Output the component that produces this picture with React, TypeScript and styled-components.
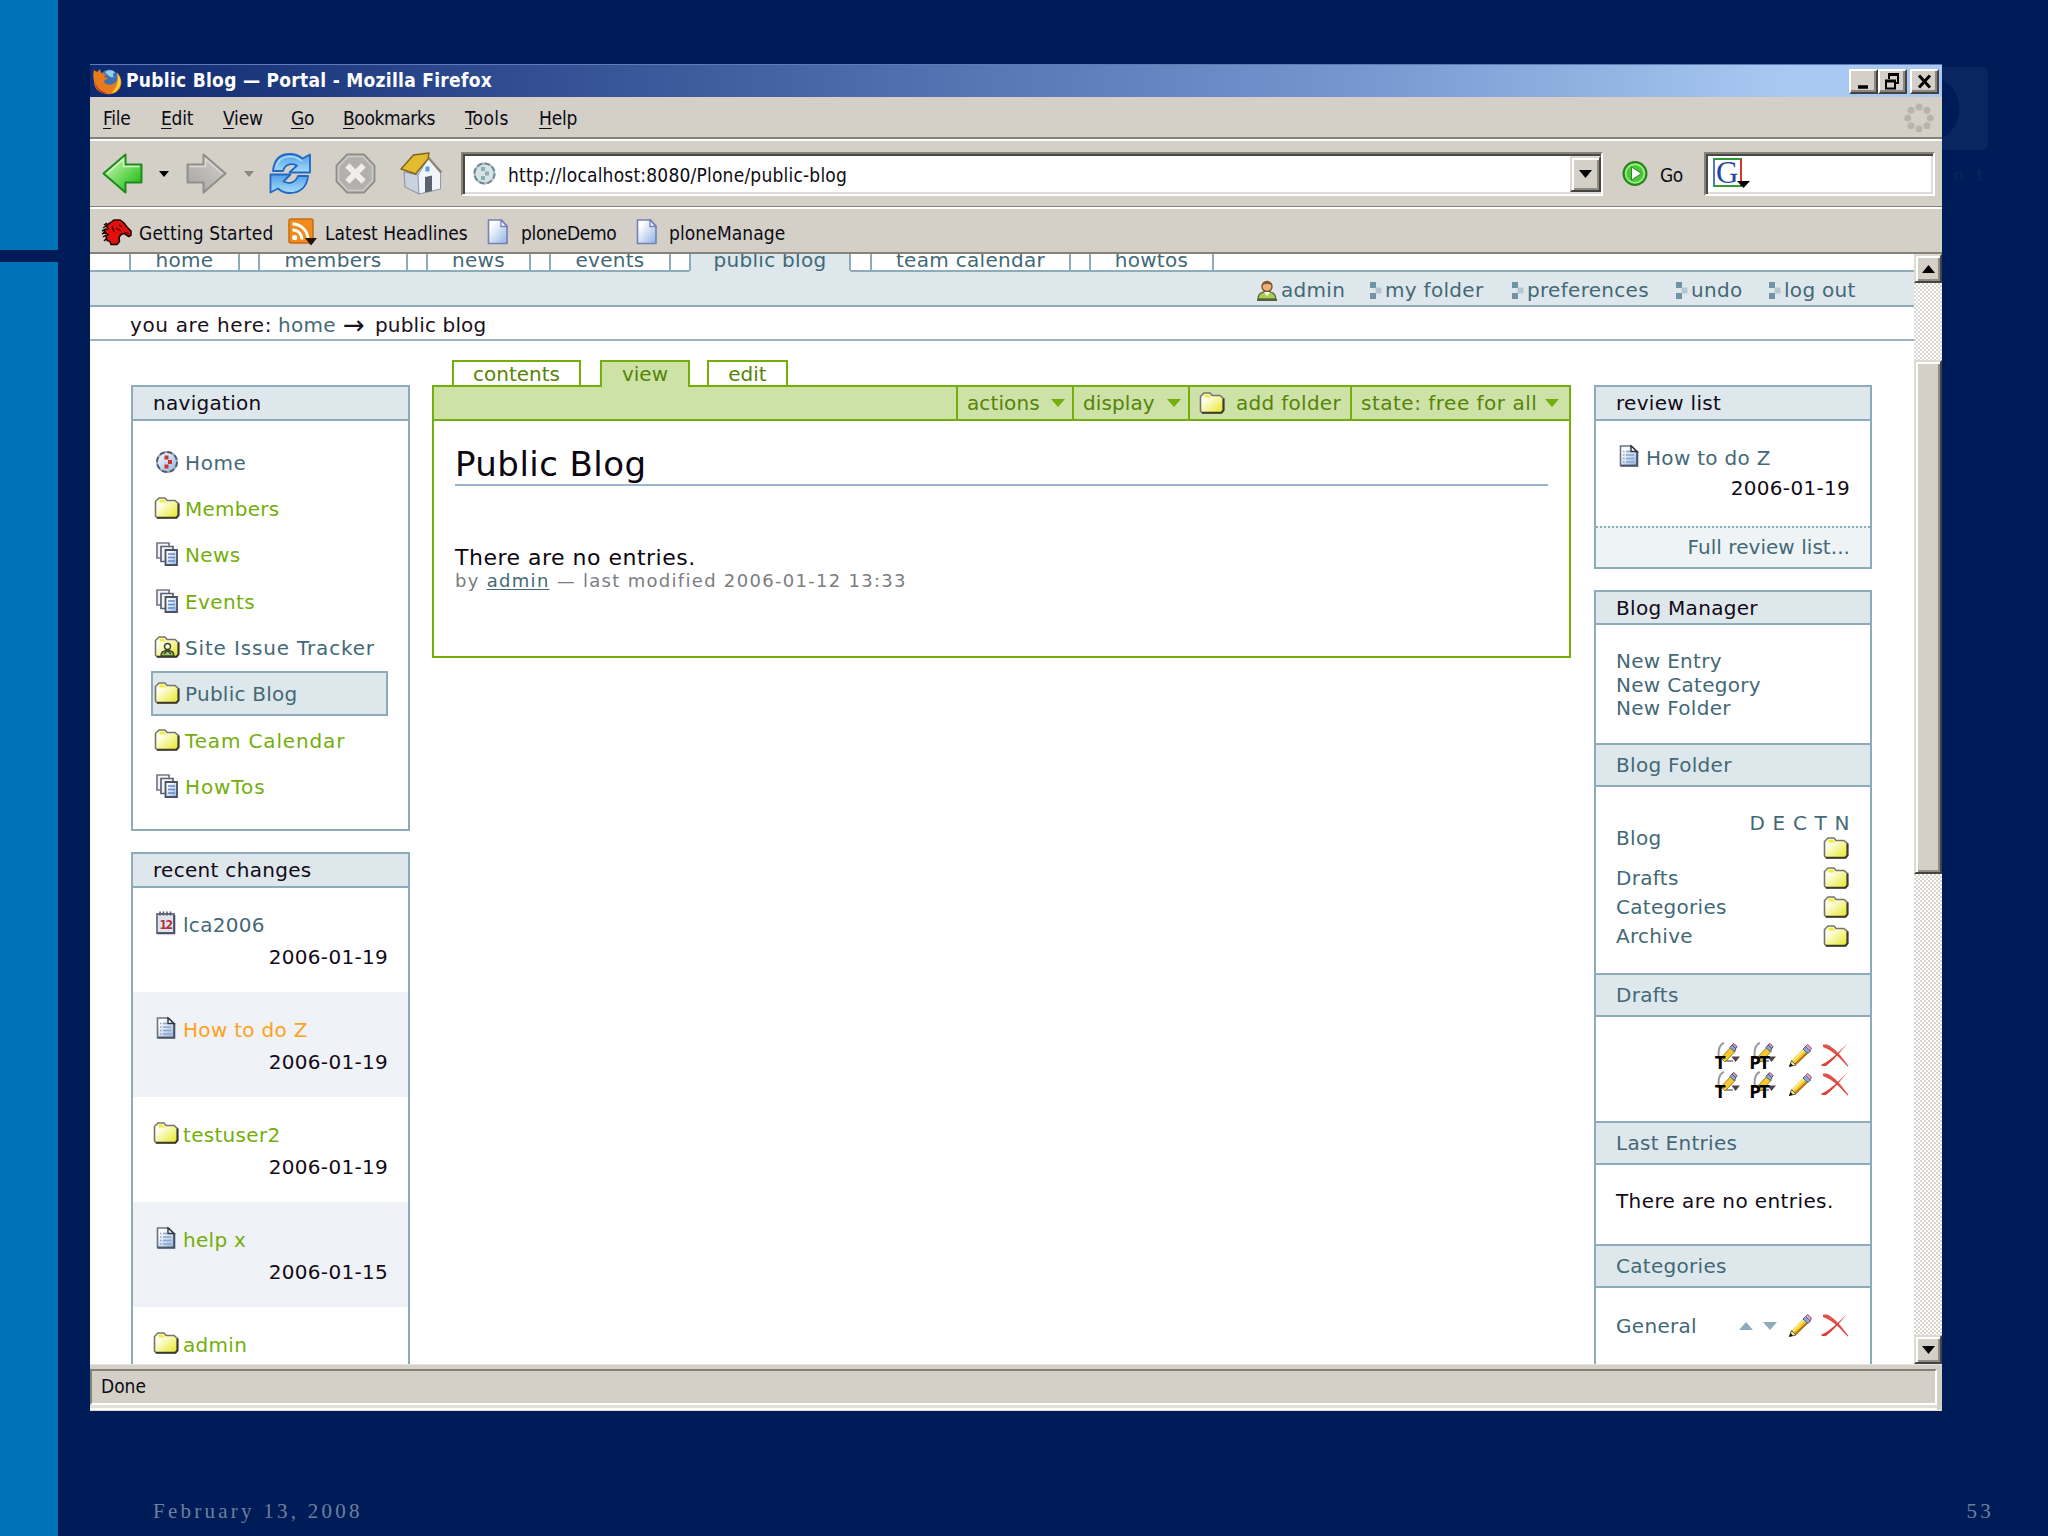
import React from "react";
import styled, { createGlobalStyle, css } from "styled-components";

const verdana = `"DejaVu Sans", Verdana, sans-serif`;
const tahoma = `"DejaVu Sans Condensed", "DejaVu Sans", Tahoma, sans-serif`;

const c = {
  navy: "#001c58",
  rail: "#0072b8",
  chrome: "#d4d0c8",
  line: "#8cacbb",
  panel: "#dee7ec",
  link: "#436976",
  green: "#74ae0b",
  greenText: "#578308",
  greenBg: "#cde2a7",
  orange: "#ffa020",
};

const Global = createGlobalStyle`
  *, *::before, *::after { box-sizing: border-box; }
  html, body { margin: 0; padding: 0; background: ${c.navy}; }
  svg { display: block; flex: none; overflow: visible; }
`;

/* ---------- slide ---------- */

const Slide = styled.div`
  display: flex;
  width: 2048px;
  height: 1536px;
  background: ${c.navy};
  overflow: hidden;
  font-family: ${verdana};
`;

const Rail = styled.div`
  display: grid;
  grid-template-rows: 250px 1fr;
  gap: 12px;
  width: 58px;
  flex: none;
`;

const RailBlock = styled.div`
  background: ${c.rail};
`;

const Stage = styled.div`
  position: relative;
  display: flex;
  flex-direction: column;
  flex: 1;
  padding: 64px 0 0 32px;
`;

const Watermark = styled.div`
  position: absolute;
  top: 67px;
  right: 60px;
  width: 120px;
  height: 83px;
  border-radius: 6px;
  background: radial-gradient(circle at 58px 42px, ${c.navy} 33px, #0a2661 34px);
`;

const WatermarkText = styled.div`
  position: absolute;
  top: 166px;
  right: 65px;
  font-size: 16px;
  letter-spacing: 13px;
  margin-right: -13px;
  color: #0a2560;
`;

const Footer = styled.div`
  display: flex;
  justify-content: space-between;
  margin-top: 87px;
  padding: 0 54px 0 63px;
  font: 21px/26px "Liberation Serif", "Times New Roman", serif;
  letter-spacing: 3.25px;
  color: #6b809c;
`;

/* ---------- browser chrome ---------- */

const Window = styled.div`
  position: relative;
  display: flex;
  flex-direction: column;
  width: 1852px;
  height: 1347px;
  background: ${c.chrome};
  font-family: ${tahoma};
  font-size: 19px;
  color: #0c0c14;
`;

const TitleBar = styled.div`
  display: flex;
  align-items: center;
  height: 33px;
  flex: none;
  padding: 0 3px;
  border-top: 1px solid #5d7cb5;
  background: linear-gradient(90deg, #0f2a70, #3e5d9f 33%, #7596cf 68%, #a8caf2 92%);
`;

const TitleText = styled.div`
  flex: 1;
  margin-left: 3px;
  padding-bottom: 2px;
  font-weight: bold;
  letter-spacing: 0.28px;
  color: #fff;
`;

const WinButton = styled.div<{ $gap?: number }>`
  display: grid;
  place-items: center;
  width: 29px;
  height: 25px;
  margin-left: ${(p) => p.$gap ?? 0}px;
  background: ${c.chrome};
  border: 2px solid;
  border-color: #fff #45433f #45433f #fff;
  box-shadow: inset -2px -2px #8a8782;
`;

const MenuBar = styled.div`
  display: grid;
  grid-template-columns: 58px 62px 68px 52px 122px 74px 1fr auto;
  align-items: center;
  height: 42px;
  flex: none;
  padding: 2px 8px 0 13px;
  border-bottom: 2px solid #85827c;
`;

const MenuItem = styled.div<{ $ls?: number }>`
  letter-spacing: ${(p) => p.$ls ?? -0.2}px;
  &::first-letter {
    text-decoration: underline;
    text-underline-offset: 3px;
  }
`;

const ToolBar = styled.div`
  display: flex;
  align-items: center;
  height: 68px;
  flex: none;
  padding: 0 7px 0 12px;
  border-top: 2px solid #fff;
  border-bottom: 1px solid #85827c;
`;

const Slot = styled.div<{ $w: number }>`
  display: flex;
  align-items: center;
  width: ${(p) => p.$w}px;
  flex: none;
`;

const Field = styled.div<{ $w: number }>`
  display: flex;
  align-items: center;
  width: ${(p) => p.$w}px;
  height: 44px;
  background: #fff;
  border: 2px solid;
  border-color: #85827c #fff #fff #85827c;
  box-shadow: inset 2px 2px #4a4845, inset -2px -2px #e0ddd6;
`;

const Url = styled.div`
  flex: 1;
  margin-left: 12px;
  padding-top: 2px;
  letter-spacing: 0.2px;
`;

const Raised = styled.div<{ $h: number; $w: number }>`
  display: grid;
  place-items: center;
  flex: none;
  width: ${(p) => p.$w}px;
  height: ${(p) => p.$h}px;
  background: ${c.chrome};
  border: 2px solid;
  border-color: #dedad2 #45433f #45433f #dedad2;
  box-shadow: inset 2px 2px #fff, inset -2px -2px #8f8c86;
`;

const GoText = styled.div`
  margin: 3px 21px 0 12px;
  letter-spacing: -0.5px;
`;

const SearchBadge = styled.div`
  position: relative;
  width: 29px;
  height: 29px;
  margin-left: 7px;
  margin-top: -2px;
  border: 2px solid;
  border-color: #2f9b35 #d8362c #2f9b35 #4f79c8;
  font: 31px/26px "Liberation Serif", serif;
  color: #2345a8;
  text-align: center;
`;

const BadgeCaret = styled.div`
  position: absolute;
  right: -10px;
  bottom: -3px;
`;

const Bookmarks = styled.div`
  display: grid;
  grid-template-columns: 37px 149px 37px 162px 34px 115px 33px 1fr;
  align-items: center;
  height: 47px;
  flex: none;
  padding: 2px 0 0 12px;
  border-top: 2px solid #fff;
  border-bottom: 2px solid #85827c;
`;

const BookmarkText = styled.div<{ $ls?: number }>`
  letter-spacing: ${(p) => p.$ls ?? 0}px;
  padding-top: 3px;
`;

const Viewport = styled.div`
  display: flex;
  height: 1110px;
  flex: none;
`;

const StatusBar = styled.div`
  height: 47px;
  padding: 4px 5px 3px 0;
  border-top: 1px solid #e8e5de;
  border-bottom: 2px solid #dedbd3;
`;

const StatusCell = styled.div`
  display: flex;
  align-items: center;
  height: 36px;
  padding: 0 0 3px 9px;
  border: 2px solid;
  border-color: #85827c #fff #fff #85827c;
  box-shadow: 0 3px #e2dfd8, 0 5px #fff;
`;

const ScrollBar = styled.div`
  display: flex;
  flex-direction: column;
  width: 28px;
`;

const Track = styled.div<{ $h?: number }>`
  ${(p) => (p.$h ? css`height: ${p.$h}px;` : css`flex: 1;`)}
  background: repeating-conic-gradient(#fff 0 25%, #d9d6cf 0 50%) 0 0 / 4px 4px;
`;

/* ---------- page ---------- */

const Page = styled.div`
  display: flex;
  flex-direction: column;
  width: 1824px;
  background: #fff;
  overflow: hidden;
  font-family: ${verdana};
  font-size: 20px;
  letter-spacing: 0.3px;
`;

const SectionTabs = styled.div`
  display: flex;
  height: 18px;
  flex: none;
  overflow: hidden;
`;

const SectionGap = styled.div<{ $w?: number }>`
  ${(p) => (p.$w ? css`width: ${p.$w}px;` : css`flex: 1;`)}
  border-bottom: 2px solid ${c.line};
`;

const SectionTab = styled.div<{ $w: number; $active?: boolean }>`
  width: ${(p) => p.$w}px;
  height: 18px;
  border: 2px solid ${c.line};
  border-top: 0;
  background: ${(p) => (p.$active ? c.panel : "#fff")};
  ${(p) => p.$active && css`border-bottom-color: ${c.panel};`}
  color: ${c.link};
  text-align: center;
`;

const SectionLabel = styled.div`
  height: 24px;
  margin-top: -6px;
  line-height: 24px;
`;

const PersonalBar = styled.div`
  display: grid;
  grid-template-columns: 113px 142px 164px 93px 145px;
  align-items: center;
  height: 35px;
  flex: none;
  padding: 3px 0 0 1167px;
  background: ${c.panel};
  border-bottom: 2px solid ${c.line};
  color: ${c.link};
`;

const PersonalItem = styled.div`
  display: flex;
  align-items: center;
`;

const Crumbs = styled.div`
  display: flex;
  align-items: center;
  height: 34px;
  flex: none;
  padding: 4px 0 0 40px;
  border-bottom: 2px solid #9ab5c1;
  color: #1b1020;
`;

const CrumbLabel = styled.span`
  letter-spacing: 0.65px;
  margin-right: 6px;
`;

const CrumbLink = styled.span`
  color: ${c.link};
  margin-right: 7px;
`;

const CrumbArrow = styled.span`
  width: 22px;
  margin-right: 10px;
  font-size: 26px;
  line-height: 24px;
  letter-spacing: 0;
`;

const CrumbHere = styled.span`
  letter-spacing: 0.15px;
`;

const Columns = styled.div`
  display: grid;
  grid-template-columns: 279px 1140px 278px;
  column-gap: 22px;
  align-items: start;
  padding-left: 41px;
`;

const Side = styled.div`
  display: flex;
  flex-direction: column;
  gap: 21px;
  padding-top: 44px;
`;

const Portlet = styled.div<{ $h?: number }>`
  ${(p) => p.$h && css`height: ${p.$h}px;`}
  border: 2px solid ${c.line};
`;

const PortletHead = styled.div<{ $h?: number }>`
  display: flex;
  align-items: center;
  height: ${(p) => p.$h ?? 34}px;
  padding: 0 20px;
  background: ${c.panel};
  border-bottom: 2px solid ${c.line};
  color: #120a16;
`;

const NavList = styled.div`
  display: flex;
  flex-direction: column;
  gap: 1.4px;
  padding: 18px 20px 0 18px;
`;

const NavItem = styled.div<{ $c: string; $active?: boolean }>`
  display: flex;
  align-items: center;
  height: 45px;
  padding-left: 1px;
  border: 2px solid ${(p) => (p.$active ? c.line : "transparent")};
  background: ${(p) => (p.$active ? c.panel : "transparent")};
  color: ${(p) => p.$c};
`;

const NavLabel = styled.span<{ $ls: number }>`
  margin: 2px 0 0 6px;
  letter-spacing: ${(p) => p.$ls}px;
`;

const IconCell = styled.span<{ $lift?: number }>`
  display: flex;
  justify-content: center;
  width: 25px;
  flex: none;
  margin-bottom: ${(p) => p.$lift ?? 0}px;
`;

const Change = styled.div<{ $first?: boolean; $odd?: boolean }>`
  height: ${(p) => (p.$first ? 104 : 105)}px;
  padding: ${(p) => (p.$first ? 21 : 22)}px 20px 0;
  background: ${(p) => (p.$odd ? "#eff2f6" : "#fff")};
`;

const ChangeTitle = styled.div<{ $c: string; $h?: number }>`
  display: flex;
  align-items: center;
  gap: 5px;
  height: ${(p) => p.$h ?? 32}px;
  color: ${(p) => p.$c};
`;

const ChangeDate = styled.div<{ $h?: number }>`
  height: ${(p) => p.$h ?? 32}px;
  line-height: ${(p) => p.$h ?? 32}px;
  text-align: right;
  color: #120a16;
`;

const ReviewBody = styled.div`
  height: 105px;
  padding: 21px 20px 0;
`;

const ReviewFooter = styled.div`
  height: 41px;
  padding-right: 20px;
  border-top: 2px dotted ${c.line};
  background: #eef3f5;
  line-height: 39px;
  text-align: right;
  color: ${c.link};
  letter-spacing: 0.05px;
`;

const SubHead = styled.div`
  display: flex;
  align-items: center;
  height: 44px;
  padding: 0 20px;
  background: ${c.panel};
  border: 2px solid ${c.line};
  border-width: 2px 0;
  color: ${c.link};
`;

const SideBody = styled.div<{ $h: number; $top: number }>`
  height: ${(p) => p.$h}px;
  padding: ${(p) => p.$top}px 20px 0;
  color: ${c.link};
`;

const LinkLine = styled.div`
  height: 23.7px;
  line-height: 23.7px;
`;

const FolderRow = styled.div<{ $h: number }>`
  display: flex;
  align-items: center;
  justify-content: space-between;
  height: ${(p) => p.$h}px;
  padding-right: 1px;
`;

const FolderTools = styled.div`
  display: grid;
  grid-template-rows: 20px 30px;
  align-items: center;
  justify-items: end;
`;

const Letters = styled.div`
  margin-right: -1px;
  letter-spacing: 0.65px;
`;

const Actions = styled.div<{ $cols: string }>`
  display: grid;
  grid-template-columns: ${(p) => p.$cols};
  align-items: center;
  justify-content: end;
  height: 29px;
`;

const Message = styled.div`
  line-height: 30px;
  letter-spacing: 0.4px;
  color: #120a16;
`;

const Main = styled.div`
  padding: 19px 1px 0 0;
`;

const ViewTabs = styled.div`
  display: flex;
  height: 25px;
  padding-left: 20px;
`;

const ViewTab = styled.div<{ $w: number; $gap: number; $active?: boolean }>`
  position: relative;
  width: ${(p) => p.$w}px;
  height: ${(p) => (p.$active ? 27 : 25)}px;
  margin-right: ${(p) => p.$gap}px;
  border: 2px solid ${c.green};
  border-bottom: 0;
  background: ${(p) => (p.$active ? c.greenBg : "#fff")};
  line-height: 24px;
  text-align: center;
  letter-spacing: 0;
  color: ${c.greenText};
`;

const ContentBox = styled.div`
  height: 273px;
  border: 2px solid ${c.green};
`;

const ContentBar = styled.div`
  display: flex;
  justify-content: flex-end;
  height: 34px;
  background: ${c.greenBg};
  border-bottom: 2px solid ${c.green};
  color: ${c.greenText};
`;

const ContentAction = styled.div<{ $w: number; $right?: number; $ls?: number }>`
  display: flex;
  align-items: center;
  justify-content: space-between;
  width: ${(p) => p.$w}px;
  padding: 0 ${(p) => p.$right ?? 7}px 0 9px;
  border-left: 2px solid ${c.green};
  letter-spacing: ${(p) => p.$ls ?? 0.3}px;
`;

const Article = styled.div`
  padding: 24px 21px 0;
  color: #0c0610;
`;

const Heading = styled.div`
  height: 41px;
  border-bottom: 2px solid #9bb6cc;
  font-size: 34px;
  line-height: 39px;
  letter-spacing: 0.45px;
`;

const Lead = styled.div`
  margin-top: 59px;
  font-size: 22px;
  line-height: 26px;
  letter-spacing: 0.5px;
`;

const Byline = styled.div`
  font-size: 18px;
  line-height: 20px;
  letter-spacing: 1.3px;
  color: #7b7d82;
`;

const Author = styled.span`
  color: ${c.link};
  text-decoration: underline;
  text-underline-offset: 2px;
`;

/* ---------- icons ---------- */

const Caret = ({ w = 14, h = 8, fill = "#000", up = false }) => (
  <svg width={w} height={h} viewBox="0 0 14 8" preserveAspectRatio="none">
    <path d={up ? "M0 8h14L7 0z" : "M0 0h14L7 8z"} fill={fill} />
  </svg>
);

const HiddenSvg = styled.svg`
  position: absolute;
  width: 0;
  height: 0;
`;

const Defs = () => (
  <HiddenSvg>
    <defs>
      <linearGradient id="folder" x1="0" y1="0" x2="1" y2="1">
        <stop offset="0.25" stopColor="#fffff0" />
        <stop offset="1" stopColor="#e6e61c" />
      </linearGradient>
      <linearGradient id="paper" x1="0" y1="0" x2="1" y2="1">
        <stop offset="0.2" stopColor="#fff" />
        <stop offset="1" stopColor="#8fb2e4" />
      </linearGradient>
      <linearGradient id="back" x1="0" y1="0" x2="1" y2="1">
        <stop offset="0.2" stopColor="#b6f2a0" />
        <stop offset="0.8" stopColor="#35c428" />
      </linearGradient>
      <linearGradient id="grey" x1="0" y1="0" x2="1" y2="1">
        <stop offset="0" stopColor="#d2d0cc" />
        <stop offset="1" stopColor="#a6a4a1" />
      </linearGradient>
      <linearGradient id="blue" x1="0" y1="0" x2="0" y2="1">
        <stop offset="0" stopColor="#4f9fe8" />
        <stop offset="1" stopColor="#a8dcfb" />
      </linearGradient>
      <linearGradient id="ball" x1="0" y1="0" x2="1" y2="1">
        <stop offset="0" stopColor="#fff" />
        <stop offset="1" stopColor="#8db4e2" />
      </linearGradient>
    </defs>
  </HiddenSvg>
);

const FolderIcon = ({ person = false }) => (
  <svg width="26" height="22" viewBox="0 0 26 22">
    <path
      d="M1.5 19V4.5L3.5 2.5 5 1h6l2 2.5h8l3.5 3V18L22 20.7H3z"
      fill="url(#folder)"
      stroke="#77756a"
      strokeWidth="1.6"
    />
    <path d="M3 20.8h19.5l2-2.5V6.5" fill="none" stroke="#3c3a2c" strokeWidth="2" />
    <path d="M5 2.5h5l2 3h-6z" fill="#f0ee3a" />
    {person && (
      <g stroke="#38422c" strokeWidth="1.4">
        <circle cx="13.5" cy="10.5" r="3" fill="#fdfbe0" />
        <path d="M7 20c0-4 3-5.5 6.5-5.5S20 16 20 20z" fill="#a9c95e" />
        <path d="M10 18l3.5-3.5L17 18" fill="none" />
      </g>
    )}
  </svg>
);

const DocIcon = () => (
  <svg width="20" height="22" viewBox="0 0 20 22">
    <path d="M1.5 1h11L18 6.5V20.5H1.5z" fill="url(#paper)" stroke="#6c7480" strokeWidth="1.6" />
    <path d="M1.5 20.7H18.3V6" fill="none" stroke="#4a5464" strokeWidth="2" />
    <path d="M12 1v5.5h6z" fill="#fff" stroke="#2c3340" strokeWidth="1.4" />
    <path
      d="M4 6.5h1.5M7 6.5h4M4 10h1.500M7 10h8M4 13.5h1.5M7 13.5h8M4 17h1.5M7 17h8"
      stroke="#8fa5c8"
      strokeWidth="1.4"
    />
  </svg>
);

const PagesIcon = () => (
  <svg width="22" height="24" viewBox="0 0 22 24">
    <path d="M1 1h12v15H1z" fill="#f3f4f8" stroke="#747986" strokeWidth="1.7" />
    <path d="M5 4.500h12v15H5z" fill="#f3f4f8" stroke="#5d6270" strokeWidth="1.7" />
    <path d="M9.5 8H21v15H9.5z" fill="url(#paper)" stroke="#4b5160" strokeWidth="1.8" />
    <path d="M12 12h7M12 15.5h7M12 19h7" stroke="#5d8ad0" strokeWidth="1.6" />
  </svg>
);

const PloneIcon = () => (
  <svg width="22" height="22" viewBox="0 0 22 22">
    <circle cx="11" cy="11" r="10" fill="url(#ball)" stroke="#98a3b4" strokeWidth="1.8" />
    <circle cx="11" cy="11" r="10" fill="none" stroke="#4d586c" strokeWidth="1.8" strokeDasharray="5 2.85" />
    <path d="M8.5 4.500h4v4h-4zM12 9h4v4h-4zM8.5 13.500h4v4h-4z" fill="#d0342c" />
  </svg>
);

const CalendarIcon = () => (
  <svg width="19" height="23" viewBox="0 0 19 23">
    <path d="M1 3h17v19H1z" fill="#dfe3ef" stroke="#6c7080" strokeWidth="1.8" />
    <path d="M1 22.300h17.300V4" fill="none" stroke="#4c5264" strokeWidth="2" />
    <path d="M4 .5v4M7.5 .5v4M11 .5v4M14.5 .5v4" stroke="#555a68" strokeWidth="1.5" />
    <CalendarDay x="3.5" y="17.5">12</CalendarDay>
  </svg>
);

const CalendarDay = styled.text`
  font: bold 12px "DejaVu Sans Condensed", sans-serif;
  letter-spacing: -1.5px;
  fill: #b0303c;
`;

const UserIcon = () => (
  <svg width="20" height="21" viewBox="0 0 20 21">
    <path d="M1 19c0-5 4-7.5 9-7.5s9 2.5 9 7.5z" fill="#a9cf52" stroke="#5d6a35" strokeWidth="1.3" />
    <path d="M7 12l3 4 3-4z" fill="#fff" />
    <circle cx="10" cy="6.5" r="5" fill="#eab27a" stroke="#80502c" strokeWidth="1.4" />
    <path d="M5 5c1-4 9-4 10 0-3-1.5-7-1.5-10 0z" fill="#8a562c" />
    <path d="M0 20h20" stroke="#56603c" strokeWidth="2" />
  </svg>
);

const Marker = () => (
  <svg width="15" height="17" viewBox="0 0 15 17">
    <path d="M0 0h6v6H0zM0 11h6v6H0z" fill="#6f95a4" />
    <path d="M5.5 5.5h6v6h-6z" fill="#b4c7d0" />
  </svg>
);

const PencilIcon = () => (
  <svg width="24" height="24" viewBox="0 0 24 24">
    <path d="M3.5 16.5L16 4l5 4.500L8 21z" fill="#f7c92c" />
    <path d="M7 20.5L20 8" stroke="#b5761a" strokeWidth="2" />
    <path d="M5 17L16.5 5.5" stroke="#fdf09a" strokeWidth="1.5" />
    <path d="M3.5 16.5L1.5 22.5 8 21z" fill="#f6e3b8" stroke="#6b5a30" strokeWidth="1" />
    <path d="M1 23l1.5-4 2.5 2.5z" fill="#111" />
    <path d="M15 5l2.5-2.5 5 4.5L20 9.5z" fill="#7db0e0" stroke="#44688c" strokeWidth="1" />
    <path d="M17.5 2.5l2-2 4 3.5-1.5 3z" fill="#e59bc0" stroke="#8c567c" strokeWidth="1" />
  </svg>
);

const CrossIcon = () => (
  <svg width="28" height="23" viewBox="0 0 28 23">
    <path d="M2 .5h4c7 3 14 11 21.500 21.500L26.500 22.500C20 15 11 6 2 3z" fill="#e05048" />
    <path d="M26 0C21 6 12 17 5 22H0.500v-1.500C9 17 18 8 26 0z" fill="#d8443c" />
  </svg>
);

const IconCaption = styled.text`
  font: bold 17px "DejaVu Sans Condensed", sans-serif;
  letter-spacing: -1.5px;
  fill: #000;
`;

const RenameIcon = ({ label }: { label: string }) => (
  <svg width="26" height="27" viewBox="0 0 26 27">
    <path d="M10 1C4 3 4 12 5 17" fill="none" stroke="#9a9a9a" strokeWidth="2" />
    <path d="M7 16L17 5l4.500 4L11 20z" fill="#f7c92c" stroke="#a87d20" strokeWidth="1" />
    <path d="M16 5.5l2-2.5 4 4-2 2.5z" fill="#7db0e0" stroke="#3f5878" strokeWidth="1" />
    <path d="M18 3l2-1.5 3 3-1 2z" fill="#e59bc0" stroke="#704860" strokeWidth="1" />
    <path d="M12 19h7" stroke="#777" strokeWidth="1.5" />
    <path d="M17.500 14.500h8.500l-4.500 5.500z" fill="#52424c" />
    <IconCaption x={label === "T" ? 1 : -0.5} y="26.5">{label}</IconCaption>
  </svg>
);

const FirefoxIcon = () => (
  <svg width="30" height="27" viewBox="0 0 30 27">
    <circle cx="16" cy="11.5" r="10" fill="#3c6fb4" />
    <path d="M12 4c4-3 9-2 10 1-2 0-3 2-1 4-3 1-6-1-9-5z" fill="#8fd0ea" />
    <path
      d="M1 2l3 2 3-3 1 4 5 1-2 3 4 1c-2 2-4 2-4 4 2 3 7 4 11 1 3-2 3-7 2-11 4 5 6 10 3 16-3 5-8 7-13 6C6 25 1 21 1 13 0 9 0 5 1 2z"
      fill="#e87a1c"
    />
    <path d="M24 5c4 5 5 10 2 15-2 3-5 5-8 5 6-4 8-12 6-20z" fill="#f9cf3a" />
    <path d="M2 13c1 7 6 11 12 12-6 1-12-4-12-12z" fill="#b3260f" />
  </svg>
);

const ArrowIcon = ({ forward = false }) => (
  <svg width="41" height="41" viewBox="0 0 41 41">
    <g transform={forward ? "translate(41 0) scale(-1 1)" : undefined}>
      <path
        d="M1.5 20.5L23.5 1.5V11.5H39.5V29.5H23.5V39.5z"
        fill={forward ? "url(#grey)" : "url(#back)"}
        stroke={forward ? "#918f8c" : "#1f8a1c"}
        strokeWidth="2"
        strokeLinejoin="round"
      />
      <path
        d="M5 20.5L21.5 6V13.5H37.5"
        fill="none"
        stroke={forward ? "#dcdad6" : "#d4f9c6"}
        strokeWidth="1.5"
      />
    </g>
  </svg>
);

const ReloadIcon = () => (
  <svg width="41" height="41" viewBox="0 0 41 41">
    <g fill="url(#blue)" stroke="#1f68c4" strokeWidth="1.8" strokeLinejoin="round">
      <path d="M3 18C4 7 10 1 20 1c6 0 9 1.500 12.500 4.500L40 1.500V19.500H19.500L27 12.500c-6-3-12-1-14 5.500z" />
      <path d="M38 23c-1 11-8 17-18 17-5 0-9-1.500-12-4.500L.5 39.500V21.500H20.500L13.500 28.500c6 3 12 1 14.500-5.500z" />
    </g>
    <path d="M6 14C8 7 13 3.500 20 3.500c5 0 8 1.500 12 4.500" fill="none" stroke="#b5defa" strokeWidth="1.4" />
  </svg>
);

const StopIcon = () => (
  <svg width="41" height="41" viewBox="0 0 41 41">
    <path
      d="M12 1.500h17l10.500 11v16L29 39.500H12L1.500 28.500v-16z"
      fill="#b3b1ae"
      stroke="#8f8d8a"
      strokeWidth="1.8"
    />
    <path d="M13 3.500h15l9.500 10v14L28 37.500H13L3.500 27.500v-14z" fill="none" stroke="#cfcdc9" strokeWidth="1.5" />
    <path d="M14.500 14.500l12 12M26.500 14.500l-12 12" stroke="#efeeec" strokeWidth="6" strokeLinecap="square" />
  </svg>
);

const HomeIcon = () => (
  <svg width="44" height="43" viewBox="0 0 44 43">
    <path d="M4 20l15 3v19L5 35z" fill="#c9d2df" stroke="#8790a0" />
    <path d="M18 23L29 5l11.500 14v18l-21.500 5z" fill="#f1f4fa" stroke="#9099a8" />
    <path d="M27 3l15.500 17-2.500 1L28 7z" fill="#8d8674" />
    <path
      d="M13.500 3L29 1l-1 6-12.500 15L1 17z"
      fill="#e3bb31"
      stroke="#7c6420"
      strokeWidth="1.4"
      strokeLinejoin="round"
    />
    <path d="M25 25l7-1.500V39l-7 1.500z" fill="#59606e" />
    <path d="M25.500 14.500h4v5h-4z" fill="#5b9be4" />
  </svg>
);

const SiteIcon = () => (
  <svg width="23" height="23" viewBox="0 0 23 23">
    <circle cx="11.5" cy="11.5" r="10" fill="#d6e4e8" stroke="#a9bcc4" strokeWidth="2" />
    <circle cx="11.5" cy="11.5" r="10" fill="none" stroke="#6e8794" strokeWidth="2" strokeDasharray="5 2.85" />
    <path d="M8 5h4v4H8zM12 9.5h4v4h-4zM8 14h4v4H8z" fill="#8eacb4" />
  </svg>
);

const GoIcon = () => (
  <svg width="26" height="27" viewBox="0 0 26 27">
    <circle cx="13" cy="13.5" r="11.5" fill="#4cc63c" stroke="#27831f" strokeWidth="2" />
    <circle cx="13" cy="13.5" r="9.3" fill="none" stroke="#a8ec90" strokeWidth="1.5" />
    <path d="M9.5 7v13l10-6.5z" fill="#fff" stroke="#2c8a22" />
  </svg>
);

const DinoIcon = () => (
  <svg width="30" height="26" viewBox="0 0 30 26">
    <path
      d="M8 4l4-3h6l4 3 3 4 4 4v4l-2 1.500-5-3-3 1-2 3 .5 4-2.500 3h-6l-1-3-3-1-1-4 2-2-4-2 1-3 3-1-2-3z"
      fill="#e0100c"
      stroke="#1c0402"
      strokeWidth="1.5"
    />
    <path
      d="M5 4L2 6M4 7L1 9M4 10L0 12M4 13L0 15M4 16L1 18M5 19L2 22"
      stroke="#1c0402"
      strokeWidth="1.5"
    />
    <path d="M17 6l3 1.500M14 9l5 3M22 13l5 2M10 7l2 6" stroke="#5a0402" strokeWidth="1.3" />
  </svg>
);

const FeedIcon = () => (
  <svg width="30" height="28" viewBox="0 0 30 28">
    <rect x="1" y="1" width="24" height="24" rx="2" fill="#f08c1e" stroke="#c86a10" strokeWidth="1.5" />
    <g fill="none" stroke="#fff" strokeWidth="2.8">
      <path d="M4.5 6C13 6 20 13 20 21.5" />
      <path d="M4.5 12c5.5 0 9.500 4 9.500 9.500" />
    </g>
    <circle cx="6.7" cy="19.5" r="2.6" fill="#fff" />
    <path d="M17 20h12l-6 7.500z" fill="#221508" />
  </svg>
);

const PageIcon = () => (
  <svg width="22" height="26" viewBox="0 0 22 26">
    <path d="M1.5 1h13L20 7v17.500H1.5z" fill="url(#paper)" stroke="#7480b8" strokeWidth="1.6" />
    <path d="M14 1v6.500h6z" fill="#f6f8ff" stroke="#7480b8" strokeWidth="1.3" />
  </svg>
);

const Throbber = () => (
  <svg width="30" height="28" viewBox="0 0 30 28">
    {Array.from({ length: 8 }, (_, i) => {
      const a = (i * Math.PI) / 4;
      return <circle key={i} cx={15 + 11.3 * Math.sin(a)} cy={14 - 11 * Math.cos(a)} r="3.5" fill="#b7b4ae" />;
    })}
  </svg>
);

/* ---------- data ---------- */

const nav = [
  { label: "Home", icon: <PloneIcon />, color: c.link, ls: 0.6 },
  { label: "Members", icon: <FolderIcon />, color: c.green, ls: 0.25 },
  { label: "News", icon: <PagesIcon />, color: c.green, ls: 0.4 },
  { label: "Events", icon: <PagesIcon />, color: c.green, ls: 0.4 },
  { label: "Site Issue Tracker", icon: <FolderIcon person />, color: c.link, ls: 0.83 },
  { label: "Public Blog", icon: <FolderIcon />, color: c.link, active: true, ls: 0.25 },
  { label: "Team Calendar", icon: <FolderIcon />, color: c.green, ls: 0.85 },
  { label: "HowTos", icon: <PagesIcon />, color: c.green, ls: 0.9 },
];

const changes = [
  { label: "lca2006", icon: <CalendarIcon />, color: c.link, date: "2006-01-19" },
  { label: "How to do Z", icon: <DocIcon />, color: c.orange, date: "2006-01-19" },
  { label: "testuser2", icon: <FolderIcon />, color: c.green, date: "2006-01-19" },
  { label: "help x", icon: <DocIcon />, color: c.green, date: "2006-01-15" },
  { label: "admin", icon: <FolderIcon />, color: c.green, date: "" },
];

const sections = [
  { label: "home", w: 111, gap: 18 },
  { label: "members", w: 150, gap: 18 },
  { label: "news", w: 105, gap: 18 },
  { label: "events", w: 122, gap: 18 },
  { label: "public blog", w: 162, gap: 19, active: true },
  { label: "team calendar", w: 201, gap: 18 },
  { label: "howtos", w: 125, gap: 0 },
];

const menus = [
  { label: "File" },
  { label: "Edit" },
  { label: "View" },
  { label: "Go" },
  { label: "Bookmarks", ls: -0.4 },
  { label: "Tools", ls: 0.4 },
  { label: "Help" },
];

/* ---------- app ---------- */

const Chrome = () => (
  <>
    <TitleBar>
      <FirefoxIcon />
      <TitleText>Public Blog — Portal - Mozilla Firefox</TitleText>
      <WinButton>
        <svg width="19" height="17"><path d="M4 14h10" stroke="#000" strokeWidth="3.5" /></svg>
      </WinButton>
      <WinButton>
        <svg width="19" height="19" fill="none" stroke="#000" strokeWidth="2">
          <path d="M6 7V2h9v9h-3M6 3h9M3 8.500h9v8H3zM3 9.500h9" />
        </svg>
      </WinButton>
      <WinButton $gap={3}>
        <svg width="16" height="15"><path d="M2 1.500l11 12M13 1.500l-11 12" stroke="#000" strokeWidth="3" /></svg>
      </WinButton>
    </TitleBar>
    <MenuBar>
      {menus.map((m) => (
        <MenuItem key={m.label} $ls={m.ls}>{m.label}</MenuItem>
      ))}
      <Throbber />
    </MenuBar>
    <ToolBar>
      <Slot $w={57}><ArrowIcon /></Slot>
      <Slot $w={27}><Caret w={10} h={6} /></Slot>
      <Slot $w={58}><ArrowIcon forward /></Slot>
      <Slot $w={26}><Caret w={10} h={6} fill="#8a8884" /></Slot>
      <Slot $w={65}><ReloadIcon /></Slot>
      <Slot $w={65}><StopIcon /></Slot>
      <Slot $w={61}><HomeIcon /></Slot>
      <Field $w={1142}>
        <Slot $w={10} />
        <SiteIcon />
        <Url>http://localhost:8080/Plone/public-blog</Url>
        <Raised $w={31} $h={36}><Caret w={13} h={8} /></Raised>
      </Field>
      <Slot $w={19} />
      <GoIcon />
      <GoText>Go</GoText>
      <Field $w={231}>
        <SearchBadge>
          G
          <BadgeCaret><Caret w={13} h={7} /></BadgeCaret>
        </SearchBadge>
      </Field>
    </ToolBar>
    <Bookmarks>
      <DinoIcon />
      <BookmarkText $ls={0.15}>Getting Started</BookmarkText>
      <FeedIcon />
      <BookmarkText>Latest Headlines</BookmarkText>
      <PageIcon />
      <BookmarkText $ls={-0.3}>ploneDemo</BookmarkText>
      <PageIcon />
      <BookmarkText $ls={0.1}>ploneManage</BookmarkText>
    </Bookmarks>
  </>
);

const LeftColumn = () => (
  <Side>
    <Portlet $h={446}>
      <PortletHead>navigation</PortletHead>
      <NavList>
        {nav.map((n) => (
          <NavItem key={n.label} $c={n.color} $active={n.active}>
            <IconCell>{n.icon}</IconCell>
            <NavLabel $ls={n.ls}>{n.label}</NavLabel>
          </NavItem>
        ))}
      </NavList>
    </Portlet>
    <Portlet>
      <PortletHead>recent changes</PortletHead>
      {changes.map((x, i) => (
        <Change key={x.label} $first={i === 0} $odd={i % 2 === 1}>
          <ChangeTitle $c={x.color}>
            <IconCell $lift={5}>{x.icon}</IconCell>
            {x.label}
          </ChangeTitle>
          <ChangeDate>{x.date}</ChangeDate>
        </Change>
      ))}
    </Portlet>
  </Side>
);

const Center = () => (
  <Main>
    <ViewTabs>
      <ViewTab $w={129} $gap={19}>contents</ViewTab>
      <ViewTab $w={90} $gap={17} $active>view</ViewTab>
      <ViewTab $w={81} $gap={0}>edit</ViewTab>
    </ViewTabs>
    <ContentBox>
      <ContentBar>
        <ContentAction $w={116} $ls={0.1}>actions<Caret fill={c.green} /></ContentAction>
        <ContentAction $w={116} $ls={0.1}>display<Caret fill={c.green} /></ContentAction>
        <ContentAction $w={162} $right={9}><FolderIcon />add folder</ContentAction>
        <ContentAction $w={219} $right={10} $ls={0.5}>state: free for all<Caret fill={c.green} /></ContentAction>
      </ContentBar>
      <Article>
        <Heading>Public Blog</Heading>
        <Lead>There are no entries.</Lead>
        <Byline>
          by <Author>admin</Author> — last modified 2006-01-12 13:33
        </Byline>
      </Article>
    </ContentBox>
  </Main>
);

const RightColumn = () => (
  <Side>
    <Portlet $h={184}>
      <PortletHead>review list</PortletHead>
      <ReviewBody>
        <ChangeTitle $c={c.link} $h={31}>
          <IconCell $lift={4}><DocIcon /></IconCell>
          How to do Z
        </ChangeTitle>
        <ChangeDate $h={31}>2006-01-19</ChangeDate>
      </ReviewBody>
      <ReviewFooter>Full review list...</ReviewFooter>
    </Portlet>
    <Portlet>
      <PortletHead $h={33}>Blog Manager</PortletHead>
      <SideBody $h={118} $top={25}>
        <LinkLine>New Entry</LinkLine>
        <LinkLine>New Category</LinkLine>
        <LinkLine>New Folder</LinkLine>
      </SideBody>
      <SubHead>Blog Folder</SubHead>
      <SideBody $h={186} $top={26}>
        <FolderRow $h={50}>
          Blog
          <FolderTools>
            <Letters>D E C T N</Letters>
            <FolderIcon />
          </FolderTools>
        </FolderRow>
        {["Drafts", "Categories", "Archive"].map((f) => (
          <FolderRow key={f} $h={29}>{f}<FolderIcon /></FolderRow>
        ))}
      </SideBody>
      <SubHead>Drafts</SubHead>
      <SideBody $h={104} $top={24}>
        {[0, 1].map((r) => (
          <Actions key={r} $cols="36px 38px 33px 29px">
            <RenameIcon label="T" />
            <RenameIcon label="PT" />
            <PencilIcon />
            <CrossIcon />
          </Actions>
        ))}
      </SideBody>
      <SubHead>Last Entries</SubHead>
      <SideBody $h={79} $top={21}>
        <Message>There are no entries.</Message>
      </SideBody>
      <SubHead>Categories</SubHead>
      <SideBody $h={90} $top={23}>
        <FolderRow $h={29}>
          General
          <Actions $cols="24px 25px 33px 28px">
            <Caret up fill={c.line} />
            <Caret fill={c.line} />
            <PencilIcon />
            <CrossIcon />
          </Actions>
        </FolderRow>
      </SideBody>
    </Portlet>
  </Side>
);

export default function App() {
  return (
    <Slide>
      <Global />
      <Defs />
      <Rail>
        <RailBlock />
        <RailBlock />
      </Rail>
      <Stage>
        <Watermark />
        <WatermarkText>nt</WatermarkText>
        <Window>
          <Chrome />
          <Viewport>
            <Page>
              <SectionTabs>
                <SectionGap $w={39} />
                {sections.map((s) => (
                  <React.Fragment key={s.label}>
                    <SectionTab $w={s.w} $active={s.active}>
                      <SectionLabel>{s.label}</SectionLabel>
                    </SectionTab>
                    {s.gap > 0 && <SectionGap $w={s.gap} />}
                  </React.Fragment>
                ))}
                <SectionGap />
              </SectionTabs>
              <PersonalBar>
                <PersonalItem><Slot $w={24}><UserIcon /></Slot>admin</PersonalItem>
                {["my folder", "preferences", "undo", "log out"].map((p) => (
                  <PersonalItem key={p}><Marker />{p}</PersonalItem>
                ))}
              </PersonalBar>
              <Crumbs>
                <CrumbLabel>you are here:</CrumbLabel>
                <CrumbLink>home</CrumbLink>
                <CrumbArrow>→</CrumbArrow>
                <CrumbHere>public blog</CrumbHere>
              </Crumbs>
              <Columns>
                <LeftColumn />
                <Center />
                <RightColumn />
              </Columns>
            </Page>
            <ScrollBar>
              <Raised $w={28} $h={29}><Caret w={13} h={8} up /></Raised>
              <Track $h={77} />
              <Raised $w={28} $h={514} />
              <Track />
              <Raised $w={28} $h={29}><Caret w={13} h={8} /></Raised>
            </ScrollBar>
          </Viewport>
          <StatusBar>
            <StatusCell>Done</StatusCell>
          </StatusBar>
        </Window>
        <Footer>
          <span>February 13, 2008</span>
          <span>53</span>
        </Footer>
      </Stage>
    </Slide>
  );
}
